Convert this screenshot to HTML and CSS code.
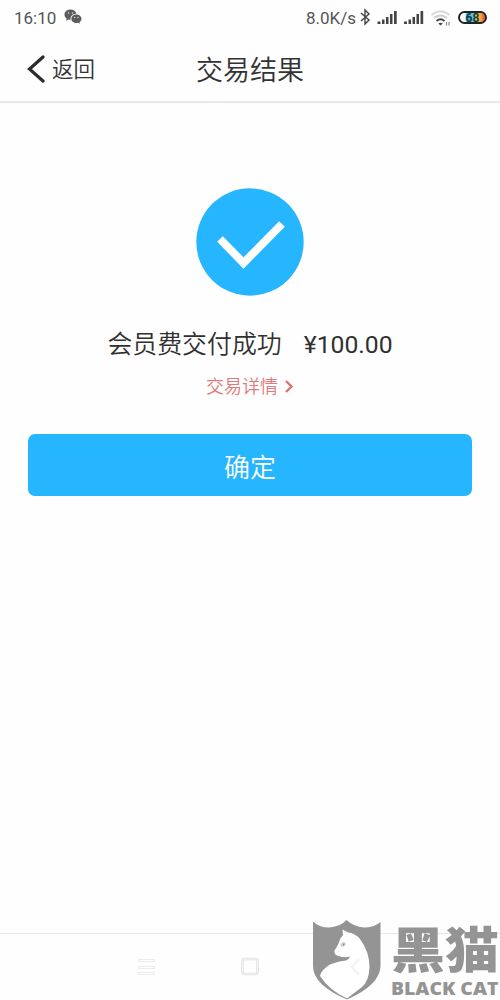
FILE: index.html
```html
<!DOCTYPE html>
<html lang="zh-CN">
<head>
<meta charset="utf-8">
<title>交易结果</title>
<link rel="stylesheet" href="styles.css">
</head>
<body>
<div class="screen">
  <div class="status">
    <span class="time">16:10</span>
    <svg class="wechat" width="18" height="16" viewBox="0 0 18 16">
      <path fill="#5c5c5c" d="M6.500 0.500C3 .5.5 2.700.5 5.500c0 1.700.8 3 2.100 4L2 11.700l2.300-1.200c.8.2 1.500.3 2.300.3C6 7.500 8.500 4.800 12.500 4.800 12 2.300 9.500.5 6.500.5z"/>
      <path fill="#5c5c5c" d="M12.300 5.500c-3 0-5 2-5 4.300s2 4.300 5 4.300c.7 0 1.300-.1 1.900-.3l1.800 1-.5-1.700c1.200-.8 2-2 2-3.300 0-2.300-2.200-4.300-5.200-4.300z"/>
      <g fill="#ddd"><circle cx="4.500" cy="4" r=".8"/><circle cx="8.500" cy="4" r=".8"/><circle cx="10.700" cy="8.500" r=".7"/><circle cx="14" cy="8.500" r=".7"/></g>
    </svg>
    <span class="speed">8.0K/s</span>
    <svg class="indicators" width="100" height="20" viewBox="0 0 100 20">
      <path d="M3 5l8 7-4 4V2l4 4-8 7" fill="none" stroke="#444" stroke-width="1.400"/>
      <g fill="#444">
        <path id="bars" d="M19.500 13.500h3V16h-3zM24 11.500h2.500V16H24zM28 9h2.500v7H28zM32 6h2.500v10H32zM36 3h2.700v13H36z"/>
        <use href="#bars" x="26.500"/>
      </g>
      <g fill="none">
        <path stroke="#dadada" stroke-width="1.800" d="M73.500 7Q82.500-.5 91.500 7"/>
        <path stroke="#ccc" stroke-width="1.800" d="M76 10Q82.500 5 89 10"/>
        <path stroke="#444" stroke-width="2" d="M78.500 13Q82.500 9.500 86.500 13"/>
      </g>
      <path fill="#444" d="M80.300 15.500Q82.500 13.800 84.700 15.500L82.500 17.500z"/>
      <path d="M88.500 14v3.500M91 14v3.500" stroke="#888" stroke-width="1.200"/>
    </svg>
    <span class="battery">68</span>
  </div>
  <header class="header">
    <div class="back">
      <svg width="20" height="28" viewBox="0 0 20 28"><path d="M17 2L3.500 14 17 26" fill="none" stroke="#2c2c2c" stroke-width="3.200" stroke-linecap="round"/></svg>
      <span>返回</span>
    </div>
    <h1 class="title">交易结果</h1>
  </header>
  <main class="result">
    <svg class="success" width="108" height="108" viewBox="0 0 108 108">
      <circle cx="54" cy="54" r="53.700" fill="#26b5ff"/>
      <path d="M24 51l23.500 24L86 36" fill="none" stroke="#fff" stroke-width="8"/>
    </svg>
    <div class="summary"><span>会员费交付成功</span><span class="amount">¥100.00</span></div>
    <div class="detail"><span>交易详情</span>
      <svg width="10" height="14" viewBox="0 0 10 14"><path d="M2 1L7.500 6.500 2 12" fill="none" stroke="#e07272" stroke-width="2.400"/></svg>
    </div>
    <button class="confirm">确定</button>
  </main>
  <nav class="nav">
    <svg width="500" height="66" viewBox="0 0 500 66" fill="none">
      <path d="M138.500 25.500h16v2h-16zM138.500 32.500h16v2h-16zM138.500 38.500h16v2h-16z" stroke="#ebebeb"/>
      <rect x="242.500" y="25" width="15" height="15" rx="2.500" stroke="#e0e0e0" stroke-width="2.500"/>
      <rect x="242.500" y="25" width="15" height="15" rx="2.500" stroke="#f5f5f5" stroke-width="1"/>
    </svg>
  </nav>
  <div class="watermark">
    <svg class="shield" width="70" height="80" viewBox="0 0 70 80">
      <path fill="#949494" d="M1 1.500Q7 7.500 17 7.500Q28 7 34.500 0Q42 7 52 7.500Q62 7.500 68.500 2V46Q68 65 35 79.500Q1 65 1 46z"/>
      <path fill="#fff" d="M30.500 9.500L36 12.500Q43 13 48 19Q57.500 32 57.500 47Q57 61 50 67L35 78.500Q17 70 8 56Q9 50 18 44.500Q27 41 34 40.500Q37 39.500 38 36.500Q31 38 26 36Q21.500 34 22.500 30.500Q27 24 28 19L31 15z"/>
      <path d="M29 26q0-4 4-3 0 4-4 3z" fill="#fff" stroke="#aaa" stroke-width=".8"/>
      <circle cx="31.500" cy="24.500" r="1" fill="#888"/>
      <path d="M47 39l-7 8 7 8" fill="none" stroke="#f2f2f2" stroke-width="2"/>
    </svg>
    <div class="brand"><span class="brand-cn">黑猫</span><span class="brand-en">BLACK CAT</span></div>
  </div>
</div>
</body>
</html>
```
FILE: styles.css
```css
* { box-sizing: border-box; }
body { margin: 0; background: #fefefe; }
.screen {
  position: relative; width: 500px; height: 1000px; overflow: hidden;
  display: flex; flex-direction: column; background: #fefefe;
  font-family: Roboto, "Noto Sans CJK SC", sans-serif; font-weight: 350; color: #333;
}
.status { height: 35px; display: flex; align-items: center; padding: 0 13px 0 14px; font-size: 17px; font-weight: 400; color: #555; }
.time { width: 50px; }
.wechat { margin-bottom: 2px; }
.speed { margin-left: auto; width: 52px; white-space: nowrap; }
.indicators { width: 100px; flex: none; }
.battery {
  width: 29px; height: 13px; border: 2px solid #222; border-radius: 7px;
  background: linear-gradient(90deg, #fff 18%, #37b8e8 30%, #58c8d8 50%, #f4dd4d 65%, #f6a040 84%, #e8402c) padding-box;
  font-size: 12px; font-weight: 700; line-height: 10px; text-align: center; color: #173744;
}
.header { height: 68px; padding-top: 2px; border-bottom: 2px solid #e8e8e8; display: grid; grid-template-columns: 1fr 108px 1fr; align-items: center; }
.back { display: flex; align-items: center; gap: 6px; padding: 0 0 1px 26px; font-size: 21.5px; line-height: 30px; }
.back span { padding-top: 2px; }
.title { margin: 0; padding-top: 3px; font-size: 27px; font-weight: 350; line-height: 40px; white-space: nowrap; }
.result { flex: 1; display: flex; flex-direction: column; align-items: center; padding: 85px 28px 0; }
.success { flex: none; margin-top: -.5px; }
.summary { display: flex; gap: 22px; align-items: baseline; margin-top: 31.5px; font-size: 24.9px; line-height: 36px; color: #303030; white-space: nowrap; }
.amount { font-size: 24.7px; font-weight: 400; }
.detail { display: flex; align-items: center; gap: 6px; margin-top: 11px; line-height: 26px; font-size: 18px; color: #e07a7a; }
.confirm { width: 444px; height: 62px; margin-top: 34px; border: 0; border-radius: 7px; background: #26b5ff; color: #fff; font: inherit; font-size: 26px; }
.nav { height: 67px; border-top: 1px solid #e8e8e8; }
.watermark { position: absolute; left: 312px; top: 920px; display: flex; gap: 9px; color: #949494; }
.brand { display: flex; flex-direction: column; }
.brand-cn { height: 60px; font-family: "Noto Sans CJK SC", sans-serif; font-weight: 900; font-size: 54px; line-height: 54px; white-space: nowrap; transform: scaleY(.9); transform-origin: 0 30px; }
.brand-en { align-self: flex-start; font-family: "Open Sans", sans-serif; font-weight: 800; font-size: 17px; line-height: 18px; white-space: nowrap; transform: scaleX(1.14); transform-origin: 0 0; }
```
